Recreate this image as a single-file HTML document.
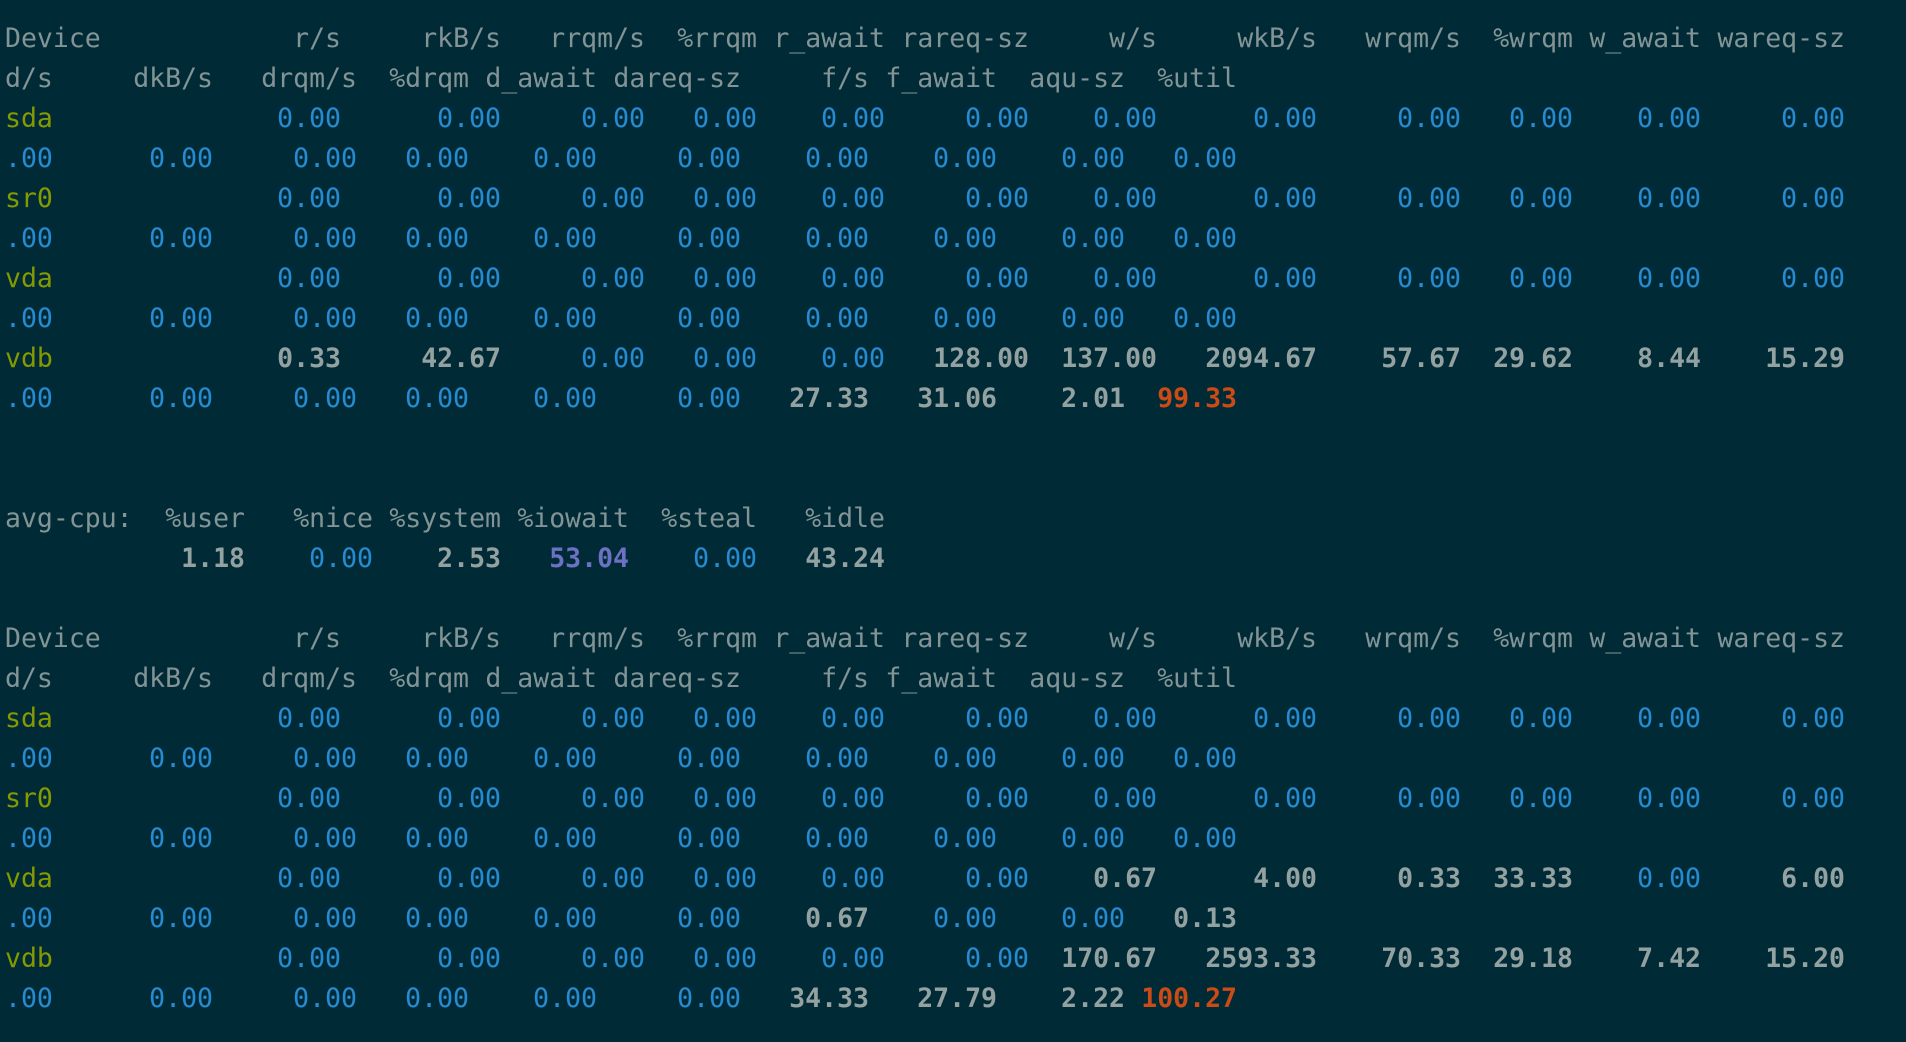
<!DOCTYPE html>
<html><head><meta charset="utf-8"><style>
html,body{margin:0;padding:0;background:#002b36;}
body{width:1906px;height:1042px;overflow:hidden;font-family:"DejaVu Sans Mono","Liberation Mono",monospace;font-size:26.5px;color:#839496;}
#t{position:absolute;left:5px;top:19px;}
.r0{height:40px;line-height:40px;white-space:nowrap;}
.r0 span{display:inline-block;text-align:right;}
.l1 span:nth-child(1){width:208px;text-align:left}
.l1 span:nth-child(2){width:128px}
.l1 span:nth-child(3){width:160px}
.l1 span:nth-child(4){width:144px}
.l1 span:nth-child(5){width:112px}
.l1 span:nth-child(6){width:128px}
.l1 span:nth-child(7){width:144px}
.l1 span:nth-child(8){width:128px}
.l1 span:nth-child(9){width:160px}
.l1 span:nth-child(10){width:144px}
.l1 span:nth-child(11){width:112px}
.l1 span:nth-child(12){width:128px}
.l1 span:nth-child(13){width:144px}
.l2 span:nth-child(1){width:48px;text-align:left}
.l2 span:nth-child(2){width:160px}
.l2 span:nth-child(3){width:144px}
.l2 span:nth-child(4){width:112px}
.l2 span:nth-child(5){width:128px}
.l2 span:nth-child(6){width:144px}
.l2 span:nth-child(7){width:128px}
.l2 span:nth-child(8){width:128px}
.l2 span:nth-child(9){width:128px}
.l2 span:nth-child(10){width:112px}
.ac span:nth-child(1){width:240px}
.ac span{width:128px}
.ac span.f{text-align:left;width:128px}
.ac span.f + span{width:112px}
.d{color:#859900}
.b{color:#268bd2}
.g{color:#93a1a1;font-weight:bold}
.x{color:#cb4b16;font-weight:bold}
.v{color:#6c71c4;font-weight:bold}
</style></head><body><div id="t">
<div class="r0 l1"><span>Device</span><span>r/s</span><span>rkB/s</span><span>rrqm/s</span><span>%rrqm</span><span>r_await</span><span>rareq-sz</span><span>w/s</span><span>wkB/s</span><span>wrqm/s</span><span>%wrqm</span><span>w_await</span><span>wareq-sz</span></div>
<div class="r0 l2"><span>d/s</span><span>dkB/s</span><span>drqm/s</span><span>%drqm</span><span>d_await</span><span>dareq-sz</span><span>f/s</span><span>f_await</span><span>aqu-sz</span><span>%util</span></div>
<div class="r0 l1"><span class="d">sda</span><span class="b">0.00</span><span class="b">0.00</span><span class="b">0.00</span><span class="b">0.00</span><span class="b">0.00</span><span class="b">0.00</span><span class="b">0.00</span><span class="b">0.00</span><span class="b">0.00</span><span class="b">0.00</span><span class="b">0.00</span><span class="b">0.00</span></div>
<div class="r0 l2"><span class="b">.00</span><span class="b">0.00</span><span class="b">0.00</span><span class="b">0.00</span><span class="b">0.00</span><span class="b">0.00</span><span class="b">0.00</span><span class="b">0.00</span><span class="b">0.00</span><span class="b">0.00</span></div>
<div class="r0 l1"><span class="d">sr0</span><span class="b">0.00</span><span class="b">0.00</span><span class="b">0.00</span><span class="b">0.00</span><span class="b">0.00</span><span class="b">0.00</span><span class="b">0.00</span><span class="b">0.00</span><span class="b">0.00</span><span class="b">0.00</span><span class="b">0.00</span><span class="b">0.00</span></div>
<div class="r0 l2"><span class="b">.00</span><span class="b">0.00</span><span class="b">0.00</span><span class="b">0.00</span><span class="b">0.00</span><span class="b">0.00</span><span class="b">0.00</span><span class="b">0.00</span><span class="b">0.00</span><span class="b">0.00</span></div>
<div class="r0 l1"><span class="d">vda</span><span class="b">0.00</span><span class="b">0.00</span><span class="b">0.00</span><span class="b">0.00</span><span class="b">0.00</span><span class="b">0.00</span><span class="b">0.00</span><span class="b">0.00</span><span class="b">0.00</span><span class="b">0.00</span><span class="b">0.00</span><span class="b">0.00</span></div>
<div class="r0 l2"><span class="b">.00</span><span class="b">0.00</span><span class="b">0.00</span><span class="b">0.00</span><span class="b">0.00</span><span class="b">0.00</span><span class="b">0.00</span><span class="b">0.00</span><span class="b">0.00</span><span class="b">0.00</span></div>
<div class="r0 l1"><span class="d">vdb</span><span class="g">0.33</span><span class="g">42.67</span><span class="b">0.00</span><span class="b">0.00</span><span class="b">0.00</span><span class="g">128.00</span><span class="g">137.00</span><span class="g">2094.67</span><span class="g">57.67</span><span class="g">29.62</span><span class="g">8.44</span><span class="g">15.29</span></div>
<div class="r0 l2"><span class="b">.00</span><span class="b">0.00</span><span class="b">0.00</span><span class="b">0.00</span><span class="b">0.00</span><span class="b">0.00</span><span class="g">27.33</span><span class="g">31.06</span><span class="g">2.01</span><span class="x">99.33</span></div>
<div class="r0"></div>
<div class="r0"></div>
<div class="r0 ac"><span class="f">avg-cpu:</span><span>%user</span><span>%nice</span><span>%system</span><span>%iowait</span><span>%steal</span><span>%idle</span></div>
<div class="r0 ac2"><span style="width:240px" class="g">1.18</span><span style="width:128px" class="b">0.00</span><span style="width:128px" class="g">2.53</span><span style="width:128px" class="v">53.04</span><span style="width:128px" class="b">0.00</span><span style="width:128px" class="g">43.24</span></div>
<div class="r0"></div>
<div class="r0 l1"><span>Device</span><span>r/s</span><span>rkB/s</span><span>rrqm/s</span><span>%rrqm</span><span>r_await</span><span>rareq-sz</span><span>w/s</span><span>wkB/s</span><span>wrqm/s</span><span>%wrqm</span><span>w_await</span><span>wareq-sz</span></div>
<div class="r0 l2"><span>d/s</span><span>dkB/s</span><span>drqm/s</span><span>%drqm</span><span>d_await</span><span>dareq-sz</span><span>f/s</span><span>f_await</span><span>aqu-sz</span><span>%util</span></div>
<div class="r0 l1"><span class="d">sda</span><span class="b">0.00</span><span class="b">0.00</span><span class="b">0.00</span><span class="b">0.00</span><span class="b">0.00</span><span class="b">0.00</span><span class="b">0.00</span><span class="b">0.00</span><span class="b">0.00</span><span class="b">0.00</span><span class="b">0.00</span><span class="b">0.00</span></div>
<div class="r0 l2"><span class="b">.00</span><span class="b">0.00</span><span class="b">0.00</span><span class="b">0.00</span><span class="b">0.00</span><span class="b">0.00</span><span class="b">0.00</span><span class="b">0.00</span><span class="b">0.00</span><span class="b">0.00</span></div>
<div class="r0 l1"><span class="d">sr0</span><span class="b">0.00</span><span class="b">0.00</span><span class="b">0.00</span><span class="b">0.00</span><span class="b">0.00</span><span class="b">0.00</span><span class="b">0.00</span><span class="b">0.00</span><span class="b">0.00</span><span class="b">0.00</span><span class="b">0.00</span><span class="b">0.00</span></div>
<div class="r0 l2"><span class="b">.00</span><span class="b">0.00</span><span class="b">0.00</span><span class="b">0.00</span><span class="b">0.00</span><span class="b">0.00</span><span class="b">0.00</span><span class="b">0.00</span><span class="b">0.00</span><span class="b">0.00</span></div>
<div class="r0 l1"><span class="d">vda</span><span class="b">0.00</span><span class="b">0.00</span><span class="b">0.00</span><span class="b">0.00</span><span class="b">0.00</span><span class="b">0.00</span><span class="g">0.67</span><span class="g">4.00</span><span class="g">0.33</span><span class="g">33.33</span><span class="b">0.00</span><span class="g">6.00</span></div>
<div class="r0 l2"><span class="b">.00</span><span class="b">0.00</span><span class="b">0.00</span><span class="b">0.00</span><span class="b">0.00</span><span class="b">0.00</span><span class="g">0.67</span><span class="b">0.00</span><span class="b">0.00</span><span class="g">0.13</span></div>
<div class="r0 l1"><span class="d">vdb</span><span class="b">0.00</span><span class="b">0.00</span><span class="b">0.00</span><span class="b">0.00</span><span class="b">0.00</span><span class="b">0.00</span><span class="g">170.67</span><span class="g">2593.33</span><span class="g">70.33</span><span class="g">29.18</span><span class="g">7.42</span><span class="g">15.20</span></div>
<div class="r0 l2"><span class="b">.00</span><span class="b">0.00</span><span class="b">0.00</span><span class="b">0.00</span><span class="b">0.00</span><span class="b">0.00</span><span class="g">34.33</span><span class="g">27.79</span><span class="g">2.22</span><span class="x">100.27</span></div>
</div></body></html>
